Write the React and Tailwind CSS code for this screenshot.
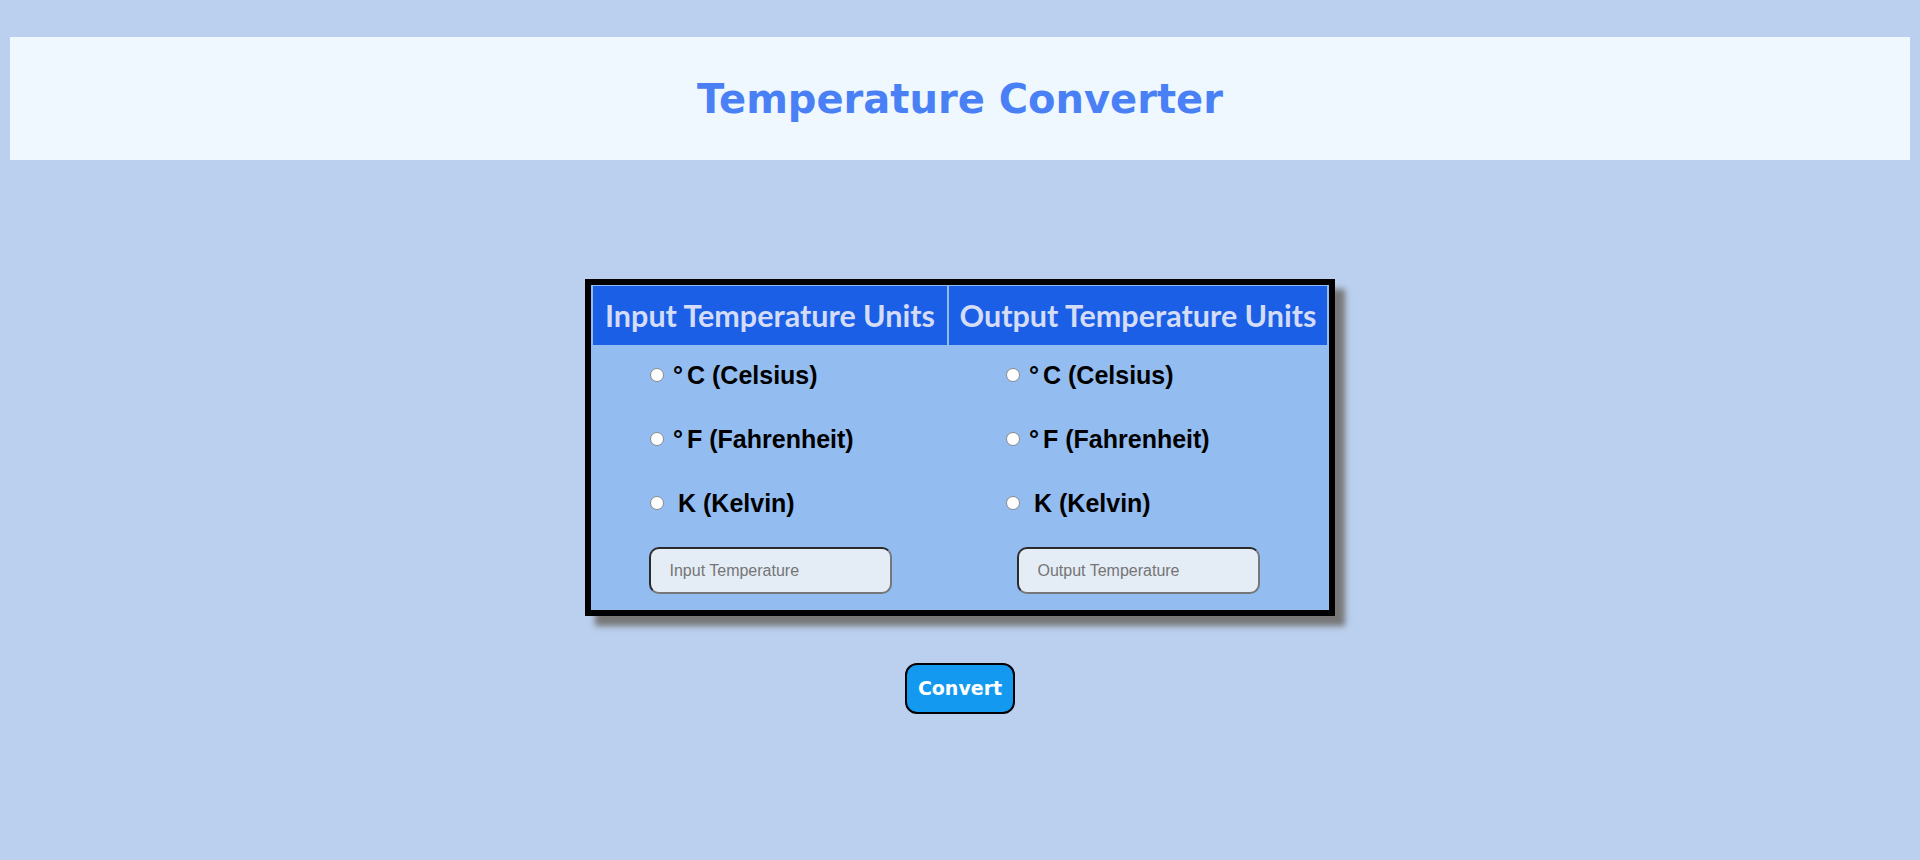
export default function App() {
  const units = [
    { deg: true, sym: "C", name: "(Celsius)" },
    { deg: true, sym: "F", name: "(Fahrenheit)" },
    { deg: false, sym: "K", name: "(Kelvin)" },
  ];
  const Column = ({ name, placeholder }) => (
    <div className="flex flex-col -mt-[2px]">
      {units.map((u) => (
        <label key={u.sym} className="h-[64px] flex items-center pl-[57px]">
          <input
            type="radio"
            name={name}
            className="appearance-none w-[14px] h-[14px] rounded-full bg-white border border-[#8a8a8a] m-0 shrink-0"
          />
          <span
            className={`${u.deg ? "ml-[9px]" : "ml-[14px]"} text-[25px] font-bold text-black leading-none`}
            style={{ fontFamily: '"Liberation Sans", Arial, sans-serif' }}
          >
            {u.deg && <span className="mr-[4px]">°</span>}
            {u.sym} {u.name}
          </span>
        </label>
      ))}
      <div className="flex justify-center mt-[12px]">
        <input
          type="text"
          placeholder={placeholder}
          className="w-[243px] h-[47px] rounded-[10px] border-2 border-t-[#2a2a2a] border-l-[#2a2a2a] border-r-[#777] border-b-[#777] bg-[#e4ecf6] pl-[19px] text-[16px] placeholder:text-[#757575] outline-none"
          style={{ fontFamily: '"Liberation Sans", Arial, sans-serif' }}
        />
      </div>
    </div>
  );

  return (
    <div className="min-h-[860px] w-full bg-[#bbd0ee] pt-[37px] flex flex-col items-center">
      <div className="self-stretch mx-[10px] h-[123px] bg-[#eff7ff] flex items-center justify-center">
        <h1
          className="text-[40px] font-bold text-[#4a80f5] leading-none"
          style={{ fontFamily: '"DejaVu Sans", Verdana, sans-serif' }}
        >
          Temperature Converter
        </h1>
      </div>

      <div className="mt-[119px] border-[6px] border-black shadow-[10px_10px_6px_#777]">
        <div className="bg-[#93bcf0] px-[2px] pt-px pb-[1px]">
          <div className="grid grid-cols-[354px_378px] gap-x-[2px]">
            <div
              className="h-[59px] bg-[#1a5fe6] flex items-center justify-center text-[30.5px] font-bold text-[#d4dcf8]"
              style={{ fontFamily: 'Lato, "Open Sans", sans-serif' }}
            >
              Input Temperature Units
            </div>
            <div
              className="h-[59px] bg-[#1a5fe6] flex items-center justify-center text-[30.5px] font-bold text-[#d4dcf8]"
              style={{ fontFamily: 'Lato, "Open Sans", sans-serif' }}
            >
              Output Temperature Units
            </div>
          </div>
          <div className="grid grid-cols-[354px_378px] gap-x-[2px] pb-[15px]">
            <Column name="in" placeholder="Input Temperature" />
            <Column name="out" placeholder="Output Temperature" />
          </div>
        </div>
      </div>

      <button
        className="mt-[47px] w-[110px] h-[51px] rounded-[12px] border-2 border-black bg-[#1399f0] text-white text-[19px] font-bold"
        style={{ fontFamily: '"DejaVu Sans", sans-serif' }}
      >
        Convert
      </button>
    </div>
  );
}
